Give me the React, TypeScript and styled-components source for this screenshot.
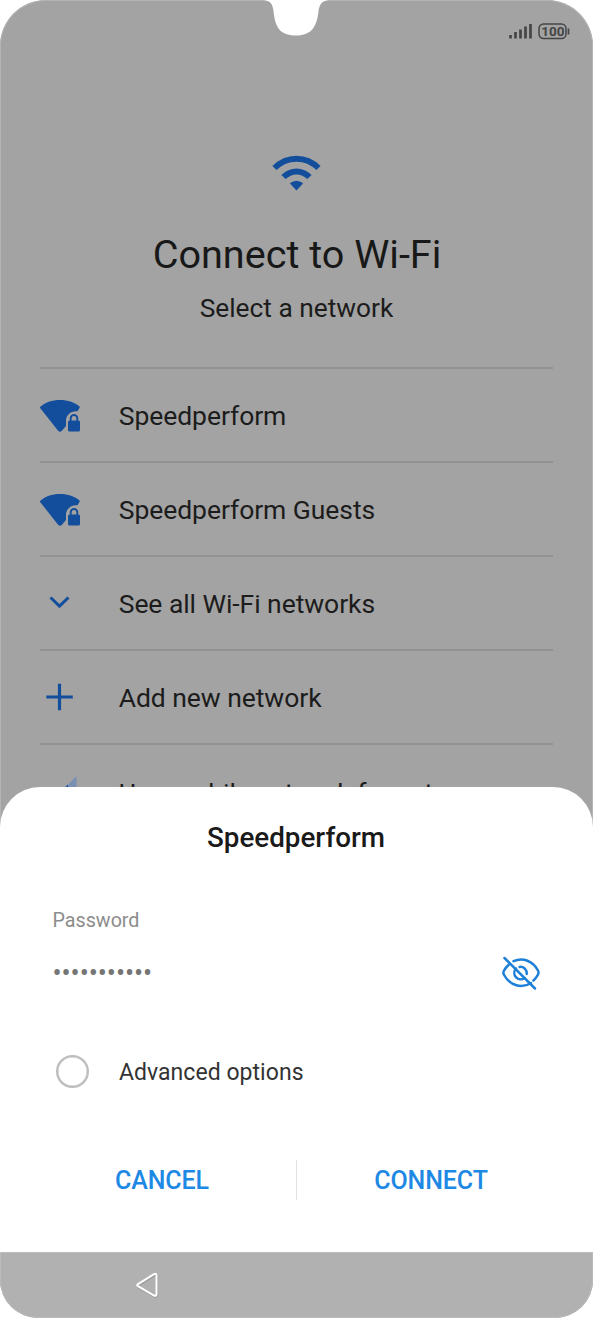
import React from "react";
import styled, { createGlobalStyle } from "styled-components";

const GlobalStyle = createGlobalStyle`
  * { box-sizing: border-box; }
  body {
    margin: 0;
    background: #fff;
    font-family: Roboto, "Liberation Sans", sans-serif;
  }
`;

const Phone = styled.main`
  position: relative;
  display: flex;
  flex-direction: column;
  width: 593px;
  height: 1318px;
  overflow: hidden;
  border-radius: 46px 46px 38px 38px;
  background: #a3a3a3;
  box-shadow: inset 0 0 0 1px #b4b4b4;
`;

const Notch = styled.svg`
  position: absolute;
  top: 0;
  left: 262px;
`;

const StatusBar = styled.header`
  display: flex;
  justify-content: flex-end;
  align-items: center;
  gap: 5px;
  height: 62px;
  flex: none;
  padding-right: 23px;
`;

const BatteryLabel = styled.text`
  font: 700 13.5px Roboto, sans-serif;
  fill: #454545;
`;

const SetupScreen = styled.section`
  display: flex;
  flex-direction: column;
  height: 787px;
  flex: none;
  overflow: hidden;
`;

const Intro = styled.div`
  display: flex;
  flex-direction: column;
  align-items: center;
  height: 305px;
  flex: none;
  padding-top: 93px;
`;

const Title = styled.h1`
  margin: 39px 0 0;
  padding-left: 1px;
  font-size: 39.6px;
  line-height: 50px;
  font-weight: 400;
  color: #181818;
`;

const Subtitle = styled.p`
  margin: 12px 0 0;
  font-size: 26.3px;
  line-height: 32px;
  color: #1c1c1c;
`;

const NetworkList = styled.ul`
  margin: 0 40px;
  padding: 0;
  list-style: none;
`;

const NetworkRow = styled.li`
  display: flex;
  align-items: center;
  height: 94px;
  border-top: 2px solid #929292;
  font-size: 26.5px;
  letter-spacing: -0.06px;
  white-space: nowrap;
  color: #1c1c1c;

  &:last-child {
    padding-top: 2px;
  }
`;

const RowIcon = styled.span`
  display: flex;
  width: 79px;
  flex: none;
  padding-top: 2px;
  margin-left: -0.3px;

  svg { display: block; }
`;

const Sheet = styled.section`
  display: flex;
  flex-direction: column;
  height: 465px;
  flex: none;
  border-radius: 40px 40px 0 0;
  background: #fff;
`;

const SheetTitle = styled.h2`
  margin: 34px 0 0;
  padding-right: 1px;
  text-align: center;
  font-size: 27.8px;
  line-height: 34px;
  font-weight: 500;
  color: #1a1a1a;
`;

const FieldLabel = styled.label`
  margin: 54px 0 0 52.5px;
  font-size: 19.7px;
  line-height: 24px;
  color: #8c8c8c;
`;

const PasswordRow = styled.div`
  display: flex;
  align-items: center;
  justify-content: space-between;
  height: 40px;
  margin-top: 20px;
  padding: 0 53.5px 0 52.5px;

  svg { margin-bottom: 1px; }
`;

const PasswordValue = styled.span`
  font-size: 27px;
  line-height: 40px;
  letter-spacing: -0.05px;
  color: #757575;
`;

const OptionRow = styled.div`
  display: flex;
  align-items: center;
  gap: 30px;
  height: 40px;
  margin: 58px 0 0 56px;
  font-size: 23px;
  letter-spacing: 0.04px;
  color: #333;
`;

const OptionLabel = styled.span`
  padding-top: 2px;
`;

const Radio = styled.span`
  width: 33px;
  height: 33px;
  border: 2px solid #bdbdbd;
  border-radius: 50%;
  box-shadow: inset 0 0 0 0.5px #bdbdbd;
`;

const Actions = styled.div`
  display: flex;
  align-items: center;
  height: 40px;
  margin-top: 69px;
`;

const Divider = styled.span`
  width: 1px;
  height: 40px;
  background: #e2e2e2;
`;

const Action = styled.button<{ $side: "left" | "right" }>`
  width: 296px;
  border: 0;
  padding: ${(p) => (p.$side === "left" ? "0 0 0 28px" : "0 28px 0 0")};
  background: none;
  font: 500 25px Roboto, sans-serif;
  letter-spacing: -0.1px;
  color: #1e88e5;
`;

const NavBar = styled.nav`
  display: flex;
  align-items: center;
  flex: 1;
  padding-left: 135px;
  border-radius: 0 0 38px 38px;
  background: #b1b1b1;
  box-shadow: inset 0 0 0 1px #bcbcbc;
`;

const BLUE = "#134e9c";

const SecuredWifi = () => (
  <svg width="41" height="34" viewBox="0 0 41 34">
    <path
      fill={BLUE}
      d="M0 8C5 3.5 12 1 20 1s15 2.500 19.500 6.500q.5.500.2 1L37.500 12.200C31 11.500 26 16 26 21.500V27l-4.300 5q-1.700 1.500-3.400 0L.3 9.200Q-.3 8.500 0 8Z"
    />
    <rect x="28" y="21.500" width="12" height="11" rx="1.600" fill={BLUE} />
    <path d="M30.700 22.500v-3.200a3.300 3.300 0 0 1 6.600 0v3.200" fill="none" stroke={BLUE} strokeWidth="1.900" />
  </svg>
);

const ChevronDown = () => (
  <svg width="40" height="34" viewBox="0 0 40 34">
    <path d="M10.500 10.500l9 8.700 9-8.700" fill="none" stroke={BLUE} strokeWidth="3" />
  </svg>
);

const Plus = () => (
  <svg width="40" height="34" viewBox="0 0 40 34">
    <path d="M6.300 16h26.500M19.500 2.800v26.500" stroke={BLUE} strokeWidth="3.200" />
  </svg>
);

const MobileSignal = () => (
  <svg width="40" height="34" viewBox="0 0 40 34">
    <path d="M36.500 0v34H2.500Z" fill="#7990b4" />
    <path d="M28 8.500v25.500H2.500Z" fill={BLUE} />
  </svg>
);

const networks = [
  { label: "Speedperform", Icon: SecuredWifi },
  { label: "Speedperform Guests", Icon: SecuredWifi },
  { label: "See all Wi-Fi networks", Icon: ChevronDown },
  { label: "Add new network", Icon: Plus },
  { label: "Use mobile network for setup", Icon: MobileSignal },
];

export default function App() {
  return (
    <>
      <GlobalStyle />
      <Phone>
        <Notch width="68" height="37" viewBox="0 0 68 37">
          <path d="M0 0C9 .5 10.500 4 11.500 11C13 26 17 35.500 34 35.500C50 35.500 55 26 56.500 11C57.500 4 60 .5 68 0Z" fill="#fff" />
        </Notch>
        <SetupScreen>
          <StatusBar>
            <svg width="24" height="17" viewBox="0 0 24 17">
              <path d="M1.500 12v3.500M6.500 9v6.500M11.500 6.500v9M16.500 3.500v12M21.500 1v14.500" stroke="#454545" strokeWidth="2.700" />
            </svg>
            <svg width="32" height="17" viewBox="0 0 32 17">
              <rect x="1" y="1" width="27" height="14.500" rx="4.500" fill="none" stroke="#454545" strokeWidth="1.500" />
              <path d="M30.500 5.500v6" stroke="#454545" strokeWidth="1.700" />
              <BatteryLabel x="14.800" y="13" textAnchor="middle">100</BatteryLabel>
            </svg>
          </StatusBar>
          <Intro>
            <svg width="50" height="36" viewBox="0 0 50 36">
              <g fill="none" stroke={BLUE}>
                <path d="M2.500 13C15 .5 34 .5 46.500 13" strokeWidth="6" />
                <path d="M11.500 22C19 14.500 30 14.500 37.500 22" strokeWidth="6" />
              </g>
              <path d="M17.800 28.300Q24.500 23 31.200 28.300L24.500 35.500Z" fill={BLUE} />
            </svg>
            <Title>Connect to Wi-Fi</Title>
            <Subtitle>Select a network</Subtitle>
          </Intro>
          <NetworkList>
            {networks.map(({ label, Icon }) => (
              <NetworkRow key={label}>
                <RowIcon><Icon /></RowIcon>
                {label}
              </NetworkRow>
            ))}
          </NetworkList>
        </SetupScreen>
        <Sheet>
          <SheetTitle>Speedperform</SheetTitle>
          <FieldLabel>Password</FieldLabel>
          <PasswordRow>
            <PasswordValue>•••••••••••</PasswordValue>
            <svg width="38" height="34" viewBox="0 0 38 34">
              <g fill="none" stroke="#1e80d8" strokeWidth="2.500" strokeLinecap="round">
                <path d="M11.500 5.200C21 1 31 5 36 14.500Q37 17 36 18.500Q34.500 21.500 31.500 24.500" />
                <path d="M7 8.500Q3.500 11.500 1.800 15Q1 17 1.800 18.500C8 30 20 33 29 27" />
                <path d="M17.500 10.900A6.400 6.400 0 0 1 24.700 18" />
                <path d="M14 12.500A6.400 6.400 0 0 0 22.500 22" />
                <path d="M2.500 2L33 32.500" />
              </g>
            </svg>
          </PasswordRow>
          <OptionRow>
            <Radio />
            <OptionLabel>Advanced options</OptionLabel>
          </OptionRow>
          <Actions>
            <Action $side="left">CANCEL</Action>
            <Divider />
            <Action $side="right">CONNECT</Action>
          </Actions>
        </Sheet>
        <NavBar>
          <svg width="26" height="30" viewBox="0 0 26 30">
            <path d="M3 14.200L19 4.200Q21.500 3 21.500 5.500V24Q21.500 26.500 19 25.500L3 16.200Q1.500 15.200 3 14.200Z" transform="translate(.5 1)" fill="none" stroke="#888" strokeWidth="2.200" opacity=".55" />
            <path d="M3 14.200L19 4.200Q21.500 3 21.500 5.500V24Q21.500 26.500 19 25.500L3 16.200Q1.500 15.200 3 14.200Z" fill="none" stroke="#fff" strokeWidth="2" />
          </svg>
        </NavBar>
      </Phone>
    </>
  );
}
